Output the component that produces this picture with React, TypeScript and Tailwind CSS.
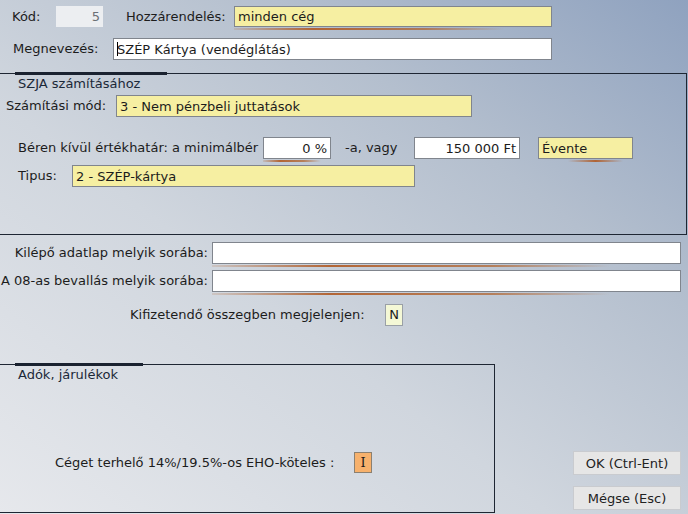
import React from 'react';

const font = "font-['DejaVu_Sans',Verdana,sans-serif]";

const Underline = ({ className = '' }: { className?: string }) => (
  <div
    className={`absolute left-0 right-0 -bottom-[3px] h-[2px] bg-[linear-gradient(to_right,rgba(176,96,40,0.15),rgba(176,90,36,0.9)_25%,rgba(176,96,40,0.7)_60%,rgba(176,96,40,0)_85%)] ${className}`}
  />
);

interface FieldProps {
  value?: string;
  width: string;
  tone?: 'yellow' | 'white' | 'disabled';
  align?: 'left' | 'right';
  underline?: boolean;
  caret?: boolean;
  h?: string;
}

const Field: React.FC<FieldProps> = ({ value = '', width, tone = 'white', align = 'left', underline, caret, h = 'h-[22px]' }) => {
  const bg =
    tone === 'yellow'
      ? 'bg-[#f6efa2] border border-[#80858d]'
      : tone === 'disabled'
      ? 'bg-[#eceef1] text-[#6b6f75]'
      : 'bg-white border border-[#80858d]';
  return (
    <div className={`relative shrink-0 ${width} ${h}`}>
      <div className={`h-full w-full flex items-center px-[3px] ${bg} ${align === 'right' ? 'justify-end' : 'justify-start'}`}>
        {caret && <span className="w-px h-[14px] bg-black -mr-px" />}
        <span className="whitespace-nowrap leading-none">{value}</span>
      </div>
      {underline && <Underline />}
    </div>
  );
};

const GroupTitle = ({ title, tab }: { title: string; tab: string }) => (
  <>
    <div className={`absolute -top-[2px] left-[15px] h-[3px] bg-[#1a2230] ${tab}`} />
    <div className="pl-[18px] pt-[3px] h-[16px] leading-[14px] text-[#1b2838]">{title}</div>
  </>
);

export default function App() {
  return (
    <div
      className={`${font} text-[13px] text-[#1c1c1c] w-[688px] h-[514px] overflow-hidden bg-[linear-gradient(to_top_right,#e6e8ec_0%,#d0d6de_40%,#b4bfce_70%,#8fa2bf_100%)]`}
    >
      {/* top rows */}
      <div className="flex items-center pt-[6px] h-[27px]">
        <span className="ml-[12px] w-[44px]">Kód:</span>
        <Field value="5" width="w-[47px]" tone="disabled" align="right" h="h-[21px]" />
        <span className="ml-[23px] w-[108px]">Hozzárendelés:</span>
        <Field value="minden cég" width="w-[318px]" tone="yellow" underline h="h-[21px]" />
      </div>
      <div className="flex items-center mt-[11px] h-[22px]">
        <span className="ml-[13px] w-[100px]">Megnevezés:</span>
        <Field value="SZÉP Kártya (vendéglátás)" width="w-[439px]" caret />
      </div>

      {/* SZJA group */}
      <div className="relative mt-[13px] w-[687px] h-[162px] border-t border-r border-b border-[#1e2633]">
        <GroupTitle title="SZJA számításához" tab="w-[152px]" />
        <div className="flex items-center mt-[5px] h-[22px]">
          <span className="ml-[6px] w-[110px]">Számítási mód:</span>
          <Field value="3 - Nem pénzbeli juttatások" width="w-[356px]" tone="yellow" />
        </div>
        <div className="flex items-center mt-[20px] h-[22px]">
          <span className="ml-[18px] w-[245px]">Béren kívül értékhatár: a minimálbér</span>
          <Field value="0 %" width="w-[68px]" align="right" underline />
          <span className="ml-[14px] w-[69px]">-a, vagy</span>
          <Field value="150 000 Ft" width="w-[106px]" align="right" />
          <div className="ml-[18px]">
            <div className="relative">
              <Field value="Évente" width="w-[95px]" tone="yellow" />
              <div className="absolute left-[30px] right-[10px] -bottom-[3px] h-[2px] bg-[linear-gradient(to_right,rgba(176,96,40,0),rgba(176,90,36,0.9)_50%,rgba(176,96,40,0))]" />
            </div>
          </div>
        </div>
        <div className="flex items-center mt-[6px] h-[22px]">
          <span className="ml-[18px] w-[54px]">Tipus:</span>
          <Field value="2 - SZÉP-kártya" width="w-[343px]" tone="yellow" />
        </div>
      </div>

      {/* row references */}
      <div className="flex items-center mt-[7px] h-[22px]">
        <span className="w-[208px] text-right">Kilépő adatlap melyik sorába:</span>
        <div className="ml-[4px]">
          <Field width="w-[469px]" underline />
        </div>
      </div>
      <div className="flex items-center mt-[6px] h-[22px]">
        <span className="w-[208px] text-right whitespace-nowrap">A 08-as bevallás melyik sorába:</span>
        <div className="ml-[4px]">
          <Field width="w-[469px]" underline />
        </div>
      </div>
      <div className="flex items-center mt-[12px] h-[22px]">
        <span className="ml-[130px] w-[255px]">Kifizetendő összegben megjelenjen:</span>
        <div className="w-[18px] h-[22px] bg-[#f4f8d6] border border-[#9aa0a6] flex items-center justify-center">N</div>
      </div>

      {/* bottom */}
      <div className="flex items-start mt-[38px]">
        <div className="relative w-[495px] h-[149px] border-t border-r border-b border-[#1e2633] shrink-0">
          <GroupTitle title="Adók, járulékok" tab="w-[128px]" />
          <div className="flex items-center mt-[71px] h-[21px]">
            <span className="ml-[55px] w-[299px]">Céget terhelő 14%/19.5%-os EHO-köteles :</span>
            <div className="w-[18px] h-[21px] bg-[#f7b16c] border border-[#8c8070] flex items-center justify-center font-['DejaVu_Serif',serif] text-[13px]">
              I
            </div>
          </div>
        </div>
        <div className="ml-[78px] mt-[87px] flex flex-col gap-[11px]">
          <button className="w-[108px] h-[24px] bg-[#e6e6e6] border border-[#c9cbcf] text-[#222] leading-none">OK (Ctrl-Ent)</button>
          <button className="w-[108px] h-[24px] bg-[#e6e6e6] border border-[#c9cbcf] text-[#222] leading-none">Mégse (Esc)</button>
        </div>
      </div>
    </div>
  );
}
